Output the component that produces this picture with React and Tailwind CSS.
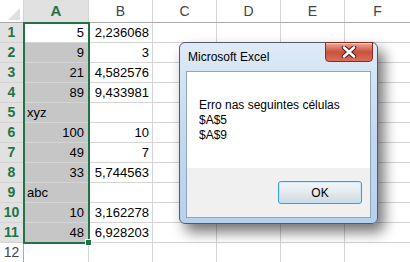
import React from 'react';

const rows = [
  { n: 1, a: '5', b: '2,236068' },
  { n: 2, a: '9', b: '3' },
  { n: 3, a: '21', b: '4,582576' },
  { n: 4, a: '89', b: '9,433981' },
  { n: 5, a: 'xyz', b: '', text: true },
  { n: 6, a: '100', b: '10' },
  { n: 7, a: '49', b: '7' },
  { n: 8, a: '33', b: '5,744563' },
  { n: 9, a: 'abc', b: '', text: true },
  { n: 10, a: '10', b: '3,162278' },
  { n: 11, a: '48', b: '6,928203' },
  { n: 12, a: '', b: '', blank: true },
];

const cell = "h-full border-r border-[#d4d4d4] flex items-center";

function CloseButton() {
  return (
    <div className="absolute right-[4px] top-[-1px] w-[48px] h-[20px] rounded-b-[4px] border border-[#8c2a1d] bg-gradient-to-b from-[#e9a99c] via-[#c9503c] to-[#d7705c] flex items-center justify-center shadow-[inset_0_1px_0_rgba(255,255,255,0.5)]">
      <svg width="16" height="12" viewBox="0 0 16 12">
        <path d="M3 1.5 L13 10.5 M13 1.5 L3 10.5" stroke="#4a1a12" strokeWidth="4.6" strokeLinecap="round" fill="none" />
        <path d="M3 1.5 L13 10.5 M13 1.5 L3 10.5" stroke="#ffffff" strokeWidth="2.6" strokeLinecap="round" fill="none" />
      </svg>
    </div>
  );
}

function Dialog() {
  return (
    <div className="absolute left-[179px] top-[42px] w-[199px] h-[182px] rounded-[6px] border border-[#4d5d6d] bg-gradient-to-b from-[#dfeaf7] via-[#c3d9f1] to-[#b6d1ee] shadow-[6px_8px_14px_rgba(0,0,0,0.55)] flex flex-col font-['Liberation_Sans',Arial,sans-serif] text-[12px] text-black">
      <div className="h-[28px] pl-[8px] flex items-center relative">
        <span>Microsoft Excel</span>
        <CloseButton />
      </div>
      <div className="flex-1 mx-[6px] mb-[5px] border border-[#8fa5ba] flex flex-col">
        <div className="flex-1 bg-white pl-[12px] pt-[26px] leading-[15px]">
          <div>Erro nas seguintes células</div>
          <div>$A$5</div>
          <div>$A$9</div>
        </div>
        <div className="h-[49px] bg-[#f0f0f0] flex justify-end items-start pt-[13px] pr-[8px]">
          <div className="w-[84px] h-[23px] rounded-[3px] border border-[#3c9be0] bg-gradient-to-b from-[#f3f6f8] via-[#e4eaee] to-[#cdd9e1] flex items-center justify-center shadow-[inset_0_0_0_1px_rgba(190,230,253,0.8)]">
            OK
          </div>
        </div>
      </div>
    </div>
  );
}

export default function App() {
  return (
    <div className="relative w-[410px] h-[262px] overflow-hidden bg-white font-['Liberation_Sans',Arial,sans-serif] text-[13px] text-black">
      {/* cabeçalho das colunas */}
      <div className="flex h-[23px] border-b border-[#ababab]">
        <div className="w-[24px] h-full border-r border-[#d4d4d4] bg-white flex items-end justify-end pr-[3px] pb-[2px]">
          <svg width="12" height="12" viewBox="0 0 12 12"><path d="M12 0 L12 12 L0 12 Z" fill="#dfdfdf" /></svg>
        </div>
        <div className="w-[65px] h-full border-r border-[#d4d4d4] bg-[#e1e1e1] flex items-center justify-center text-[15px] font-bold text-[#217346]">A</div>
        <div className="w-[64px] h-full border-r border-[#d4d4d4] flex items-center justify-center text-[14px] text-[#444]">B</div>
        <div className="w-[64px] h-full border-r border-[#d4d4d4] flex items-center justify-center text-[14px] text-[#444]">C</div>
        <div className="w-[64px] h-full border-r border-[#d4d4d4] flex items-center justify-center text-[14px] text-[#444]">D</div>
        <div className="w-[64px] h-full border-r border-[#d4d4d4] flex items-center justify-center text-[14px] text-[#444]">E</div>
        <div className="flex-1 h-full flex items-center justify-center text-[14px] text-[#444]">F</div>
      </div>

      {/* linhas */}
      {rows.map((r) => (
        <div key={r.n} className="flex h-[20px] border-b border-[#d4d4d4]">
          <div className={`w-[24px] h-full border-r border-[#ababab] flex items-center justify-center ${r.blank ? 'text-[14px] text-[#444]' : 'bg-[#e1e1e1] text-[14px] font-bold text-[#217346]'}`}>
            {r.n}
          </div>
          <div className={`w-[65px] ${cell} ${r.blank || r.n === 1 ? 'bg-white' : 'bg-[#c6c6c6]'} ${r.text ? 'justify-start pl-[3px]' : 'justify-end pr-[4px]'}`}>
            {r.a}
          </div>
          <div className={`w-[64px] ${cell} justify-end pr-[3px]`}>{r.b}</div>
          <div className={`w-[64px] ${cell}`} />
          <div className={`w-[64px] ${cell}`} />
          <div className={`w-[64px] ${cell}`} />
          <div className="flex-1 h-full" />
        </div>
      ))}

      {/* seleção A1:A11 */}
      <div className="absolute left-[23px] top-[22px] w-[67px] h-[222px] border-2 border-[#217346]" />
      <div className="absolute left-[85px] top-[239px] w-[7px] h-[7px] bg-[#217346] border border-white" />

      <Dialog />
    </div>
  );
}
